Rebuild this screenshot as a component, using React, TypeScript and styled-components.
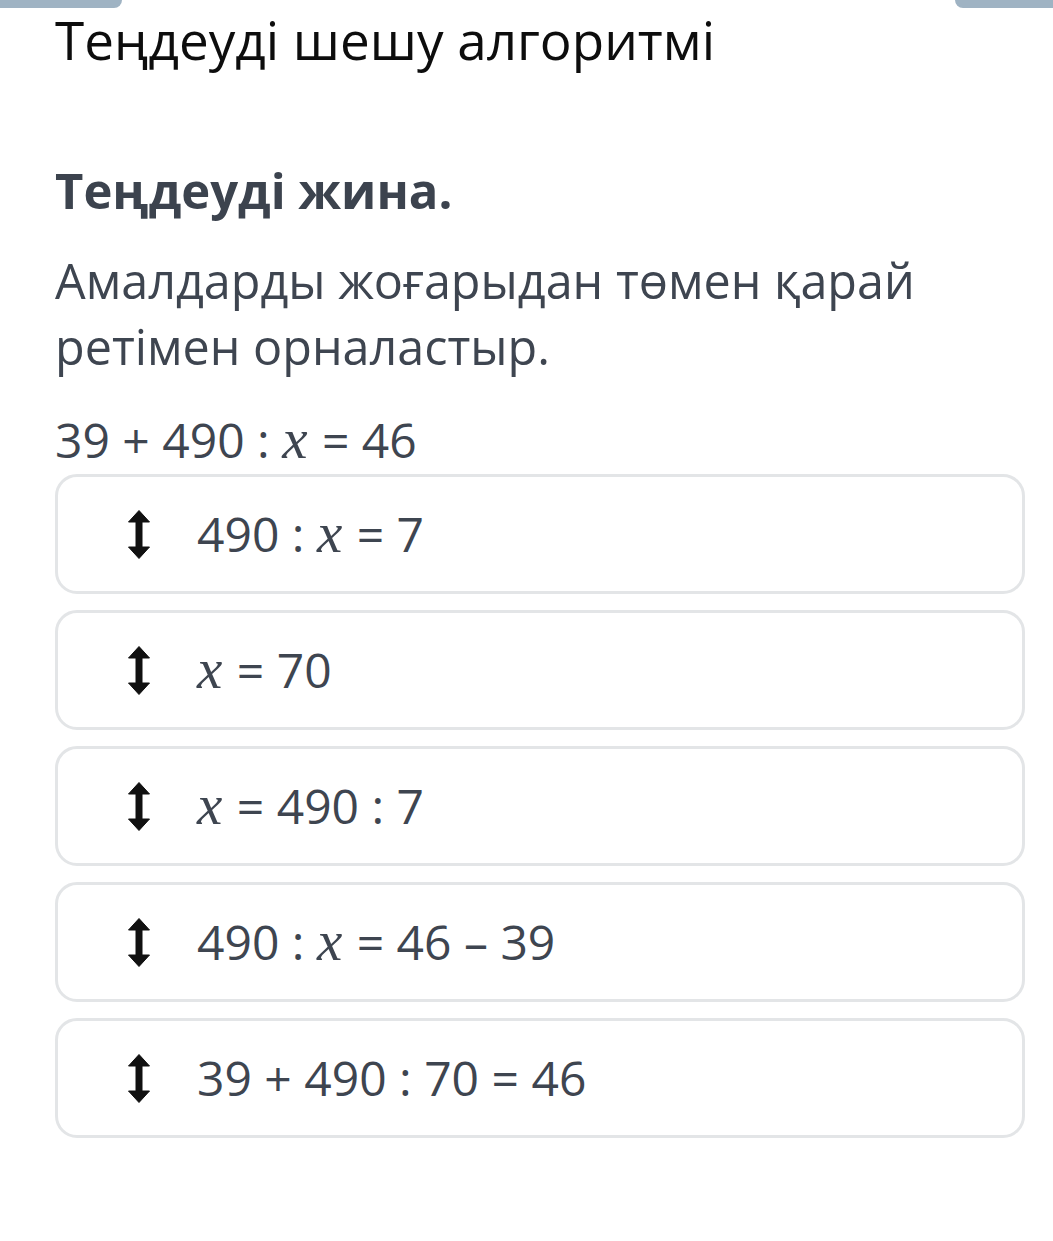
import React from 'react';
import styled, { createGlobalStyle } from 'styled-components';

const GlobalStyle = createGlobalStyle`
  html, body {
    margin: 0;
    padding: 0;
    background: #ffffff;
  }
  body {
    font-family: "Open Sans", "Noto Sans", sans-serif;
  }
`;

const Page = styled.div`
  width: 1053px;
  min-height: 1241px;
  box-sizing: border-box;
  background: #ffffff;
`;

const TopBar = styled.div`
  display: flex;
  justify-content: space-between;
  height: 8px;
`;

const Tab = styled.div<{ $side: 'left' | 'right' }>`
  width: ${(p) => (p.$side === 'left' ? '122px' : '98px')};
  height: 8px;
  background: #9fb3c3;
  border-radius: ${(p) => (p.$side === 'left' ? '0 0 14px 0' : '0 0 0 14px')};
`;

const Content = styled.div`
  padding: 0 28px 0 55px;
`;

const PageTitle = styled.h1`
  margin: -8px 0 0;
  font-family: "Open Sans", sans-serif;
  font-stretch: 90%;
  font-weight: 400;
  font-size: 53px;
  line-height: 80px;
  color: #0d0d0d;
`;

const TaskTitle = styled.h2`
  margin: 77px 0 0;
  font-weight: 700;
  font-size: 49px;
  line-height: 66px;
  color: #3c434e;
`;

const TaskText = styled.p`
  margin: 24px 0 0;
  font-weight: 400;
  font-size: 48.5px;
  line-height: 66px;
  color: #3e4550;
`;

const Equation = styled.div`
  margin-top: 28px;
  font-size: 48px;
  line-height: 66px;
  color: #3e4550;
`;

const Var = styled.span`
  font-family: "Liberation Serif", "DejaVu Serif", serif;
  font-style: italic;
  font-size: 57px;
  line-height: 1;
  margin-right: 2px;
`;

const List = styled.div`
  display: flex;
  flex-direction: column;
  gap: 16px;
  margin-top: 1px;
`;

const Card = styled.div`
  display: flex;
  align-items: center;
  height: 120px;
  box-sizing: border-box;
  border: 3px solid #e3e5e7;
  border-radius: 22px;
  padding-left: 70px;
  background: #ffffff;
`;

const Handle = styled.svg`
  width: 22px;
  height: 49px;
  flex: none;
`;

const CardText = styled.div`
  margin-left: 47px;
  font-size: 48px;
  line-height: 60px;
  color: #3e4550;
`;

const DragIcon = () => (
  <Handle viewBox="0 0 22 49">
    <path
      d="M11 0.5 L21.5 12 L14 12 L14 37 L21.5 37 L11 48.5 L0.5 37 L8 37 L8 12 L0.5 12 Z"
      fill="#111111"
      stroke="#111111"
      strokeWidth="1"
      strokeLinejoin="round"
    />
  </Handle>
);

const X = () => <Var>x</Var>;

const steps: React.ReactNode[] = [
  <>490 : <X /> = 7</>,
  <><X /> = 70</>,
  <><X /> = 490 : 7</>,
  <>490 : <X /> = 46 – 39</>,
  <>39 + 490 : 70 = 46</>,
];

export default function App() {
  return (
    <>
      <GlobalStyle />
      <Page>
        <TopBar>
          <Tab $side="left" />
          <Tab $side="right" />
        </TopBar>
        <Content>
          <PageTitle>Теңдеуді шешу алгоритмі</PageTitle>
          <TaskTitle>Теңдеуді жина.</TaskTitle>
          <TaskText>Амалдарды жоғарыдан төмен қарай ретімен орналастыр.</TaskText>
          <Equation>
            39 + 490 : <X /> = 46
          </Equation>
          <List>
            {steps.map((s, i) => (
              <Card key={i}>
                <DragIcon />
                <CardText>{s}</CardText>
              </Card>
            ))}
          </List>
        </Content>
      </Page>
    </>
  );
}
